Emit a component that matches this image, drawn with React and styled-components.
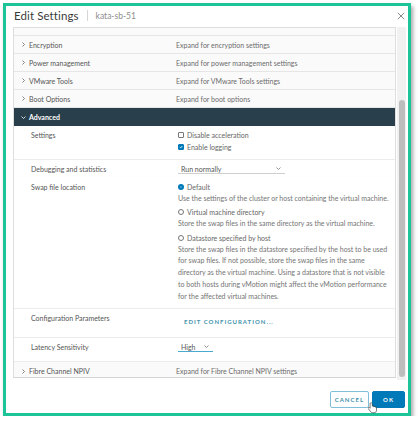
import React from 'react';
import styled, { createGlobalStyle } from 'styled-components';

const GlobalStyle = createGlobalStyle`
  html, body {
    margin: 0;
    background: #fff;
  }
  body {
    font-family: Lato, "Open Sans", sans-serif;
    color: #565656;
  }
`;

const collapsed = [
  ['Encryption', 'Expand for encryption settings'],
  ['Power management', 'Expand for power management settings'],
  ['VMware Tools', 'Expand for VMware Tools settings'],
  ['Boot Options', 'Expand for boot options'],
];

const Chevron = ({ open, color = '#666' }) => (
  <svg width="5" height="5" viewBox="0 0 10 10">
    {open ? (
      <polyline points="1,3 5,7 9,3" fill="none" stroke={color} strokeWidth="1.6" />
    ) : (
      <polyline points="3,1 7,5 3,9" fill="none" stroke={color} strokeWidth="1.6" />
    )}
  </svg>
);

const App = () => {
  return (
    <>
      <GlobalStyle />
      <Frame>
        <Header>
          <Title>Edit Settings</Title>
          <Divider />
          <VmName>kata-sb-51</VmName>
          <Close>
            <svg width="8" height="8" viewBox="0 0 10 10">
              <path d="M1 1L9 9M9 1L1 9" stroke="#777" strokeWidth="1.1" />
            </svg>
          </Close>
        </Header>

        <Body>
          <List>
            <Stub />
            {collapsed.map(([name, hint]) => (
              <Row key={name}>
                <RowName>
                  <Chevron />
                  {name}
                </RowName>
                <RowHint>{hint}</RowHint>
              </Row>
            ))}
            <SectionHead>
              <Chevron open color="#fff" />
              Advanced
            </SectionHead>

            <SubRow $h={34}>
              <Label>Settings</Label>
              <Value>
                <Check>
                  <Box />
                  Disable acceleration
                </Check>
                <Check>
                  <Box $checked>
                    <svg width="6" height="6" viewBox="0 0 10 10">
                      <polyline points="2,5 4.3,7.5 8,2.5" fill="none" stroke="#fff" strokeWidth="1.8" />
                    </svg>
                  </Box>
                  Enable logging
                </Check>
              </Value>
            </SubRow>

            <SubRow $h={18} $flat>
              <Label>Debugging and statistics</Label>
              <Value>
                <Select $w={107}>
                  Run normally
                  <Chevron open color="#777" />
                </Select>
              </Value>
            </SubRow>

            <SubRow $h={131}>
              <Label>Swap file location</Label>
              <Value>
                <Option>
                  <Radio $on />
                  Default
                </Option>
                <Desc>Use the settings of the cluster or host containing the virtual machine.</Desc>
                <Option>
                  <Radio />
                  Virtual machine directory
                </Option>
                <Desc>Store the swap files in the same directory as the virtual machine.</Desc>
                <Option>
                  <Radio />
                  Datastore specified by host
                </Option>
                <Desc>
                  Store the swap files in the datastore specified by the host to be used
                  for swap files. If not possible, store the swap files in the same
                  directory as the virtual machine. Using a datastore that is not visible
                  to both hosts during vMotion might affect the vMotion performance
                  for the affected virtual machines.
                </Desc>
              </Value>
            </SubRow>

            <SubRow $h={29}>
              <Label>Configuration Parameters</Label>
              <Value>
                <LinkButton>EDIT CONFIGURATION...</LinkButton>
              </Value>
            </SubRow>

            <SubRow $h={24}>
              <Label>Latency Sensitivity</Label>
              <Value>
                <Select $w={35} $active>
                  High
                  <Chevron open color="#777" />
                </Select>
              </Value>
            </SubRow>

            <Row>
              <RowName>
                <Chevron />
                Fibre Channel NPIV
              </RowName>
              <RowHint>Expand for Fibre Channel NPIV settings</RowHint>
            </Row>
          </List>
          <Track>
            <Thumb />
          </Track>
        </Body>

        <Footer>
          <Button>CANCEL</Button>
          <Button $primary>
            OK
            <Cursor>
              <svg width="9" height="12" viewBox="0 0 18 24">
                <path
                  d="M6 1.5c-1 0-1.8.8-1.8 1.8v9.2l-1.4-1.5c-.7-.7-1.8-.7-2.4 0-.6.6-.6 1.6 0 2.2l5 6.3c.9 1.2 2.2 2 3.8 2h3.2c2.6 0 4.6-2 4.6-4.6v-5.4c0-.9-.7-1.6-1.6-1.6-.5 0-.9.2-1.2.5 0-.9-.7-1.6-1.6-1.6-.6 0-1 .3-1.300.7-.1-.8-.8-1.500-1.600-1.500-.4 0-.8.1-1 .4V3.3C7.8 2.3 7 1.5 6 1.5z"
                  fill="#fff"
                  stroke="#222"
                  strokeWidth="1.2"
                />
              </svg>
            </Cursor>
          </Button>
        </Footer>
      </Frame>
    </>
  );
};

const Frame = styled.div`
  margin: 3px 0 0 3px;
  width: 408px;
  height: 413px;
  box-sizing: border-box;
  border: 3px solid #1dc498;
  box-shadow: 2px 3px 4px rgba(0, 0, 0, 0.35);
  background: #fff;
  display: flex;
  flex-direction: column;
`;

const Header = styled.div`
  height: 21px;
  display: flex;
  align-items: center;
  padding: 0 3px 2px 8px;
  box-sizing: border-box;
`;

const Title = styled.div`
  font-size: 11.5px;
  color: #3a3a3a;
  letter-spacing: 0.1px;
`;

const Divider = styled.div`
  width: 1px;
  height: 11px;
  background: #d6d6d6;
  margin: 0 8px 0 8px;
`;

const VmName = styled.div`
  font-size: 8.5px;
  color: #8e8e8e;
`;

const Close = styled.div`
  margin-left: auto;
  display: flex;
`;

const Body = styled.div`
  display: flex;
  height: 353px;
  padding-left: 7px;
  padding-right: 2px;
`;

const List = styled.div`
  width: 383px;
  height: 351px;
  box-sizing: border-box;
  border: 1px solid #dedede;
  border-bottom-color: #d4d4d4;
  overflow: hidden;
  background: #fff;
`;

const Stub = styled.div`
  height: 7px;
  background: #fafafa;
  border-bottom: 1px solid #e6e6e6;
`;

const Row = styled.div`
  height: 18px;
  box-sizing: border-box;
  display: grid;
  grid-template-columns: 162px 1fr;
  align-items: center;
  background: #fafafa;
  border-bottom: 1px solid #e6e6e6;
  font-size: 7px;
  &:last-child {
    border-bottom: none;
  }
`;

const RowName = styled.div`
  display: flex;
  align-items: center;
  gap: 3px;
  padding-left: 7px;
  color: #555;
`;

const RowHint = styled.div`
  color: #6c6c6c;
`;

const SectionHead = styled.div`
  height: 18px;
  display: flex;
  align-items: center;
  gap: 3px;
  padding-left: 7px;
  background: #293f4b;
  color: #fff;
  font-size: 7px;
  font-weight: 700;
`;

const SubRow = styled.div`
  height: ${(p) => p.$h}px;
  box-sizing: border-box;
  display: grid;
  grid-template-columns: 164px 1fr;
  border-bottom: 1px solid ${(p) => (p.$flat ? '#fdfdfd' : '#ececec')};
  padding-top: 4px;
  font-size: 7px;
  background: #fff;
`;

const Label = styled.div`
  padding-left: 17px;
  color: #555;
  line-height: 10px;
`;

const Value = styled.div`
  display: flex;
  flex-direction: column;
  align-items: flex-start;
  line-height: 10px;
`;

const Check = styled.div`
  display: flex;
  align-items: center;
  gap: 3px;
  height: 14px;
  margin-top: -2px;
  color: #666;
`;

const Box = styled.span`
  width: 6px;
  height: 6px;
  box-sizing: border-box;
  border: 1px solid ${(p) => (p.$checked ? '#0079b8' : '#777')};
  border-radius: 1px;
  background: ${(p) => (p.$checked ? '#0079b8' : '#fff')};
  display: flex;
  align-items: center;
  justify-content: center;
`;

const Select = styled.div`
  width: ${(p) => p.$w}px;
  box-sizing: border-box;
  display: flex;
  align-items: center;
  justify-content: space-between;
  padding: 0 4px 0 3px;
  height: 10px;
  border-bottom: 1px solid ${(p) => (p.$active ? '#49a9cf' : '#cfcfcf')};
  color: #555;
`;

const Option = styled.div`
  display: flex;
  align-items: center;
  gap: 3px;
  height: 12px;
  margin-top: 1.5px;
  color: #666;
  &:first-child {
    margin-top: -1px;
  }
`;

const Radio = styled.span`
  width: 6px;
  height: 6px;
  box-sizing: border-box;
  border-radius: 50%;
  border: ${(p) => (p.$on ? '2px solid #0079b8' : '1px solid #777')};
  background: ${(p) => (p.$on ? '#4aa3d6' : '#fff')};
`;

const Desc = styled.div`
  width: 212px;
  line-height: 11.8px;
  color: #747474;
`;

const LinkButton = styled.div`
  margin-top: 4px;
  padding-left: 6px;
  font-size: 6px;
  font-weight: 700;
  letter-spacing: 1px;
  color: #3f93ab;
`;

const Track = styled.div`
  width: 9px;
  margin-left: 1px;
  height: 353px;
  background: #f1f1f1;
  display: flex;
  justify-content: center;
  padding-top: 73px;
  box-sizing: border-box;
`;

const Thumb = styled.div`
  width: 6px;
  height: 277px;
  border-radius: 3px;
  background: #bdbdbd;
`;

const Footer = styled.div`
  flex: 1;
  display: flex;
  justify-content: flex-end;
  align-items: flex-start;
  gap: 3px;
  padding: 11px 3px 0 0;
`;

const Button = styled.div`
  position: relative;
  height: 17px;
  box-sizing: border-box;
  padding: 0 ${(p) => (p.$primary ? 10 : 4)}px;
  display: flex;
  align-items: center;
  justify-content: center;
  border: 1px solid ${(p) => (p.$primary ? '#0079b8' : '#7fbfd8')};
  border-radius: 2px;
  background: ${(p) => (p.$primary ? '#0079b8' : '#fff')};
  color: ${(p) => (p.$primary ? '#fff' : '#3f93ab')};
  font-size: 6px;
  font-weight: 700;
  letter-spacing: 1px;
`;

const Cursor = styled.span`
  position: absolute;
  left: -5px;
  top: 10px;
  display: flex;
`;

export default App;
